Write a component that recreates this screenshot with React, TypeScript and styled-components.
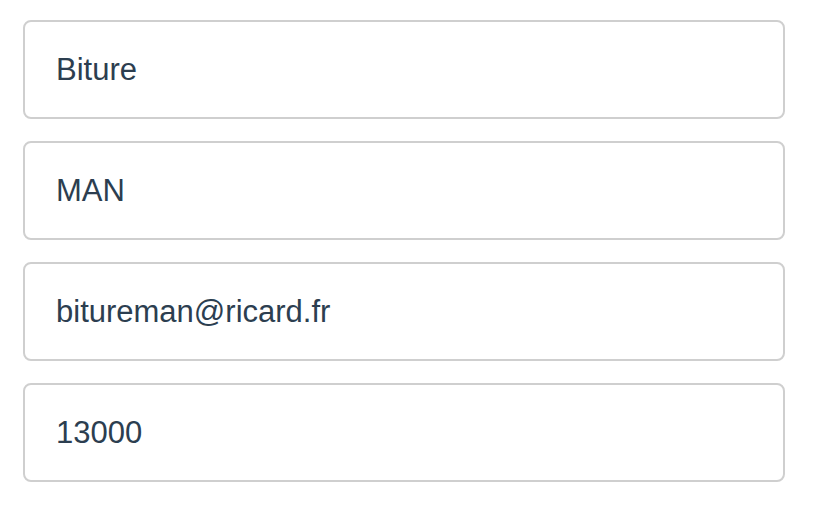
import React from "react";
import styled, { createGlobalStyle } from "styled-components";

const Global = createGlobalStyle`
  html, body { margin: 0; padding: 0; background: #ffffff; }
  * { box-sizing: border-box; }
`;

const Form = styled.div`
  display: flex;
  flex-direction: column;
  gap: 22px;
  padding: 20px 0 0 23px;
  width: 785px;
`;

const Field = styled.div`
  height: 99px;
  border: 2px solid #cfcfcf;
  border-radius: 8px;
  display: flex;
  align-items: center;
  padding: 0 0 0 31px;
  font-family: "Liberation Sans", Arial, sans-serif;
  font-size: 31px;
  color: #2c3e50;
  background: #fff;
`;

const values = ["Biture", "MAN", "bitureman@ricard.fr", "13000"];

export default function App() {
  return (
    <>
      <Global />
      <Form>
        {values.map((v) => (
          <Field key={v}>{v}</Field>
        ))}
      </Form>
    </>
  );
}
